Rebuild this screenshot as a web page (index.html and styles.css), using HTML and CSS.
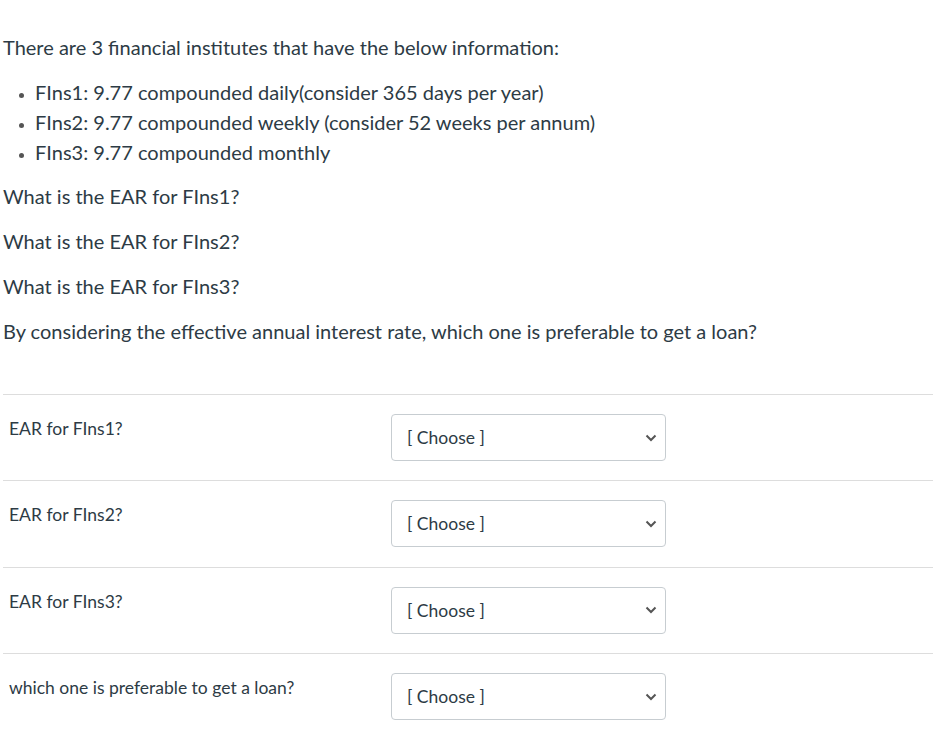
FILE: index.html
```html
<!DOCTYPE html>
<html>
<head>
<meta charset="utf-8">
<link rel="stylesheet" href="styles.css">
</head>
<body>
<div class="page">
  <div class="question">
    <p>There are 3 financial institutes that have the below information:</p>
    <ul>
      <li>FIns1: 9.77 compounded daily(consider 365 days per year)</li>
      <li>FIns2: 9.77 compounded weekly (consider 52 weeks per annum)</li>
      <li>FIns3: 9.77 compounded monthly</li>
    </ul>
    <p>What is the EAR for FIns1?</p>
    <p>What is the EAR for FIns2?</p>
    <p>What is the EAR for FIns3?</p>
    <p>By considering the effective annual interest rate, which one is preferable to get a loan?</p>
  </div>
  <div class="answers">
    <div class="row">
      <div class="label">EAR for FIns1?</div>
      <div class="select"><span>[ Choose ]</span><svg class="chev" width="12" height="8" viewBox="0 0 12 8"><path d="M1.5 1.5 L6 6 L10.5 1.5" fill="none" stroke="#555" stroke-width="2"/></svg></div>
    </div>
    <div class="row">
      <div class="label">EAR for FIns2?</div>
      <div class="select"><span>[ Choose ]</span><svg class="chev" width="12" height="8" viewBox="0 0 12 8"><path d="M1.5 1.5 L6 6 L10.5 1.5" fill="none" stroke="#555" stroke-width="2"/></svg></div>
    </div>
    <div class="row">
      <div class="label">EAR for FIns3?</div>
      <div class="select"><span>[ Choose ]</span><svg class="chev" width="12" height="8" viewBox="0 0 12 8"><path d="M1.5 1.5 L6 6 L10.5 1.5" fill="none" stroke="#555" stroke-width="2"/></svg></div>
    </div>
    <div class="row">
      <div class="label">which one is preferable to get a loan?</div>
      <div class="select"><span>[ Choose ]</span><svg class="chev" width="12" height="8" viewBox="0 0 12 8"><path d="M1.5 1.5 L6 6 L10.5 1.5" fill="none" stroke="#555" stroke-width="2"/></svg></div>
    </div>
  </div>
</div>
</body>
</html>
```
FILE: styles.css
```css
html, body {
  margin: 0;
  padding: 0;
  background: #fff;
}
body {
  font-family: Lato, "Open Sans", sans-serif;
  color: #2d3b45;
}
.page {
  padding: 32px 0 0 3px;
}
.question {
  font-size: 20px;
  line-height: 30px;
}
.question p {
  margin: 0 0 15px 0;
}
.question ul {
  margin: 0 0 14px 0;
  padding-left: 32px;
}
.question li::marker {
  font-size: 14px;
  color: #555;
}
.answers {
  margin-top: 48px;
}
.row {
  display: flex;
  border-top: 1px solid #ddd;
  padding: 19px 0 19.4px 0;
}
.label {
  width: 382px;
  padding-left: 6px;
  padding-top: 2px;
  font-size: 17.5px;
  line-height: 26px;
}
.select {
  box-sizing: border-box;
  width: 275px;
  height: 47px;
  border: 1px solid #c7cdd1;
  border-radius: 4px;
  display: flex;
  align-items: center;
  justify-content: space-between;
  padding: 0 8px 0 15px;
  font-size: 17.5px;
}
.chev {
  display: block;
}
```
